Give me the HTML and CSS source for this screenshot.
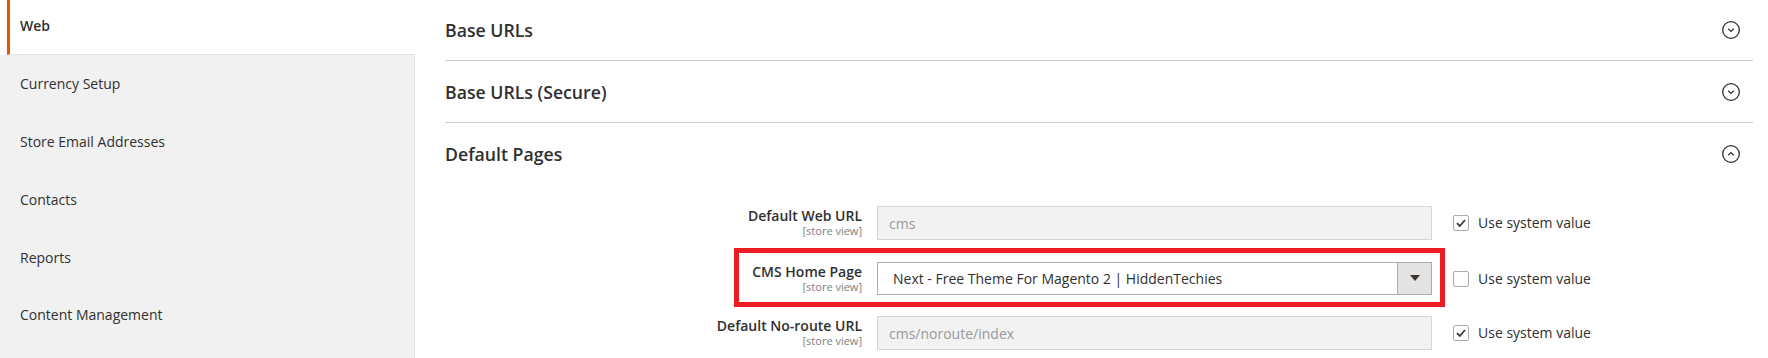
FILE: index.html
```html
<!DOCTYPE html>
<html lang="en">
<head>
<meta charset="utf-8">
<title>Configuration - Web</title>
<link rel="stylesheet" href="styles.css">
</head>
<body>
<div class="page">
  <aside class="nav">
    <div class="nav-item active">Web</div>
    <div class="nav-rest">
      <div class="nav-item">Currency Setup</div>
      <div class="nav-item">Store Email Addresses</div>
      <div class="nav-item">Contacts</div>
      <div class="nav-item">Reports</div>
      <div class="nav-item">Content Management</div>
    </div>
  </aside>
  <main class="content">
    <section class="block first">
      <div class="block-head">
        <span class="block-title">Base URLs</span>
        <svg class="toggle" width="18" height="18" viewBox="0 0 18 18"><circle cx="9" cy="9" r="8.3" fill="none" stroke="#303030" stroke-width="1.3"/><path d="M6.2 7.8 L9 10.4 L11.8 7.8" fill="none" stroke="#303030" stroke-width="1.3"/></svg>
      </div>
    </section>
    <section class="block">
      <div class="block-head">
        <span class="block-title">Base URLs (Secure)</span>
        <svg class="toggle" width="18" height="18" viewBox="0 0 18 18"><circle cx="9" cy="9" r="8.3" fill="none" stroke="#303030" stroke-width="1.3"/><path d="M6.2 7.8 L9 10.4 L11.8 7.8" fill="none" stroke="#303030" stroke-width="1.3"/></svg>
      </div>
    </section>
    <section class="block open">
      <div class="block-head">
        <span class="block-title">Default Pages</span>
        <svg class="toggle" width="18" height="18" viewBox="0 0 18 18"><circle cx="9" cy="9" r="8.3" fill="none" stroke="#303030" stroke-width="1.3"/><path d="M6.2 10.2 L9 7.6 L11.8 10.2" fill="none" stroke="#303030" stroke-width="1.3"/></svg>
      </div>
      <div class="fields">
        <div class="row">
          <div class="label"><span class="lbl">Default Web URL</span><span class="scope">[store view]</span></div>
          <div class="control"><div class="input disabled">cms</div></div>
          <div class="sys"><span class="cb"><svg width="12" height="12" viewBox="0 0 12 12"><path d="M2 6.2 L4.8 9 L10 3" fill="none" stroke="#41362f" stroke-width="1.8"/></svg></span>Use system value</div>
        </div>
        <div class="row highlighted">
          <div class="label"><span class="lbl">CMS Home Page</span><span class="scope">[store view]</span></div>
          <div class="control">
            <div class="select"><span class="select-text">Next - Free Theme For Magento 2 | HiddenTechies</span><span class="select-btn"><span class="arrow"></span></span></div>
          </div>
          <div class="sys"><span class="cb"></span>Use system value</div>
        </div>
        <div class="row">
          <div class="label"><span class="lbl">Default No-route URL</span><span class="scope">[store view]</span></div>
          <div class="control"><div class="input disabled">cms/noroute/index</div></div>
          <div class="sys"><span class="cb"><svg width="12" height="12" viewBox="0 0 12 12"><path d="M2 6.2 L4.8 9 L10 3" fill="none" stroke="#41362f" stroke-width="1.8"/></svg></span>Use system value</div>
        </div>
      </div>
    </section>
  </main>
</div>
</body>
</html>
```
FILE: styles.css
```css
*, *::before, *::after { box-sizing: border-box; }
html, body { margin: 0; padding: 0; background: #ffffff; }
body {
  font-family: "Open Sans", "Liberation Sans", sans-serif;
  color: #303030;
  font-size: 14px;
}
.page {
  display: flex;
  height: 358px;
  overflow: hidden;
}
.nav {
  width: 415px;
  flex: none;
  display: flex;
  flex-direction: column;
}
.nav-item {
  height: 57.75px;
  display: flex;
  align-items: center;
  padding-left: 20px;
  font-size: 14px;
  color: #303030;
}
.nav-item.active {
  height: 55px;
  margin-left: 7px;
  border-left: 3px solid #eb5202;
  border-bottom: 1px solid #e3e3e3;
  padding-left: 10px;
  padding-bottom: 3px;
  font-weight: 600;
  background: #ffffff;
}
.nav-rest {
  flex: 1;
  background: #f1f1f1;
  border-right: 1px solid #e3e3e3;
}
.content {
  flex: 1;
  padding: 0 15px 0 30px;
}
.block {
  border-bottom: 1px solid #cccccc;
}
.block.first { margin-top: -1px; }
.block.open { border-bottom: none; }
.block-head {
  height: 61px;
  display: flex;
  align-items: center;
  justify-content: space-between;
}
.block-title {
  font-size: 17.7px;
  font-weight: 600;
  color: #303030;
}
.toggle {
  margin-right: 13px;
}
.fields {
  padding-top: 22px;
  display: flex;
  flex-direction: column;
  gap: 21.5px;
}
.row {
  display: flex;
  align-items: flex-start;
  position: relative;
}
.label {
  width: 417px;
  display: flex;
  flex-direction: column;
  align-items: flex-end;
  text-align: right;
}
.lbl {
  font-size: 14px;
  font-weight: 600;
  line-height: 19px;
  color: #303030;
}
.scope {
  font-size: 11px;
  line-height: 11px;
  color: #808080;
}
.control {
  margin-left: 15px;
  width: 555px;
}
.input {
  height: 34px;
  border: 1px solid #adadad;
  padding: 0 11px;
  display: flex;
  align-items: center;
  font-size: 14px;
}
.input.disabled {
  background: #f2f2f2;
  border-color: #d6d6d6;
  color: #999999;
}
.select {
  height: 33px;
  border: 1px solid #adadad;
  background: #ffffff;
  display: flex;
  align-items: stretch;
}
.select-text {
  flex: 1;
  padding-left: 15px;
  display: flex;
  align-items: center;
  font-size: 14px;
  color: #303030;
}
.select-btn {
  width: 34px;
  background: #e3e3e3;
  border-left: 1px solid #adadad;
  display: flex;
  align-items: center;
  justify-content: center;
}
.arrow {
  width: 0;
  height: 0;
  border-left: 5px solid transparent;
  border-right: 5px solid transparent;
  border-top: 6px solid #41362f;
}
.sys {
  margin-left: 21px;
  margin-top: 9px;
  display: flex;
  align-items: center;
  gap: 9px;
  font-size: 14px;
  line-height: 16px;
  color: #303030;
}
.cb {
  width: 16px;
  height: 16px;
  border: 1px solid #adadad;
  border-radius: 2px;
  background: #ffffff;
  display: flex;
  align-items: center;
  justify-content: center;
}
.highlighted::after {
  content: "";
  position: absolute;
  left: 289px;
  top: -14px;
  width: 711px;
  height: 59px;
  border: 5px solid #ed1c24;
  pointer-events: none;
}
```
